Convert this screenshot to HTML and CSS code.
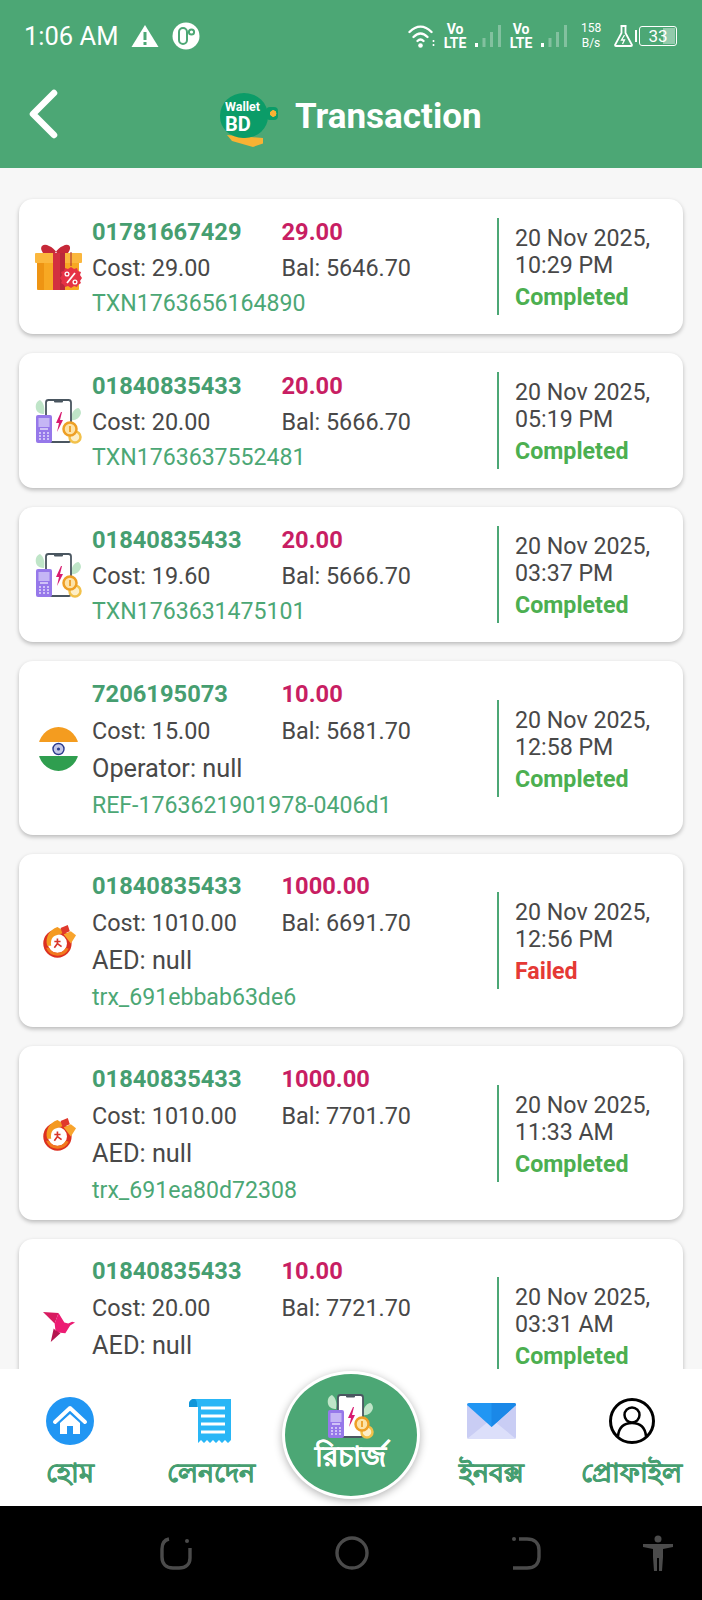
FILE: index.html
```html
<!DOCTYPE html>
<html lang="en" dir="ltr">

<head>
  <meta charset="utf-8">
  <title>Transaction</title>
  <link rel="stylesheet" href="styles.css">
</head>

<body>

  <!-- shared icons -->
  <svg class="defs" width="0" height="0">
    <symbol id="ic-gift" viewBox="0 0 47 47">
      <path d="M8 9C3 2 9-1 14 2c3 1 6 4 8 7zM33 9c5-7 0-10-5-7-3 1-6 4-8 7z" fill="#c62838"/>
      <rect x="2" y="18" width="42" height="28" rx="1" fill="#f7a823"/>
      <path d="M2 18h7v28H4a2 2 0 0 1-2-2z" fill="#ee9413"/>
      <rect x="0" y="9" width="47" height="10" rx="1" fill="#fbb73d"/>
      <rect x="18" y="9" width="12" height="37" fill="#d32f3f"/>
      <rect x="25" y="9" width="5" height="37" fill="#b9283a"/>
      <path d="M36 8v14" stroke="#a82233" stroke-width="1"/>
      <path d="M36 23l3 2 3-1 1 3 3 1-1 3 2 3-2 3 1 2-3 2-1 2-3-1-3 2-3-2-3 1-1-2-3-2 1-2-2-3 2-3-1-3 3-1 1-3 3 1z" fill="#e53245"/>
      <path d="M40 29l-8 10" stroke="#fff" stroke-width="1.8"/>
      <circle cx="32" cy="30" r="1.900" fill="none" stroke="#fff" stroke-width="1.300"/>
      <circle cx="40" cy="38" r="1.900" fill="none" stroke="#fff" stroke-width="1.300"/>
    </symbol>

    <symbol id="ic-recharge" viewBox="0 0 47 47">
      <path d="M1 11C0 6 2 3 5 2c4 3 5 8 4 14-3 0-7-1-8-5z" fill="#bfe5c8"/>
      <path d="M46 15c0-3-2-5-3-5-4 1-7 5-7 12 4 1 9-2 10-7z" fill="#bfe5c8"/>
      <rect x="11" y="2" width="25" height="42" rx="2.500" fill="#fff" stroke="#4a5660" stroke-width="1.800"/>
      <path d="M19 2h9v1.500a1 1 0 0 1-1 1h-7a1 1 0 0 1-1-1z" fill="#4a5660"/>
      <path d="M26 14l-5 11h3l-2 9 6-12h-3l2-8z" fill="#d81b70"/>
      <rect x="1" y="17" width="16" height="28" rx="2" fill="#9678ea"/>
      <rect x="3.500" y="20" width="11" height="9" fill="#c5b6f5"/>
      <path d="M5 31h8M4 35h2M8 35h2M12 35h2M4 38h2M8 38h2M12 38h2M4 41h2M8 41h2M12 41h2" stroke="#e3dbfb" stroke-width="1.500"/>
      <circle cx="40" cy="39" r="5.500" fill="#fdeec6" stroke="#f2c14a" stroke-width="2.500"/>
      <circle cx="35" cy="31" r="6.500" fill="#fde3a8" stroke="#ee9f25" stroke-width="2.500"/>
      <path d="M35 28v6" stroke="#ee9f25" stroke-width="1.800"/>
    </symbol>

    <symbol id="ic-india" viewBox="0 0 41 44">
      <clipPath id="flag-clip"><ellipse cx="20.500" cy="22" rx="20.500" ry="22"/></clipPath>
      <g clip-path="url(#flag-clip)">
        <rect width="41" height="15" fill="#f49c1f"/>
        <rect y="15" width="41" height="14" fill="#fff"/>
        <rect y="29" width="41" height="15" fill="#2f9e4f"/>
      </g>
      <circle cx="20.500" cy="22" r="5.500" fill="#c3c6e6" stroke="#2b3a8c" stroke-width="1.400"/>
      <circle cx="20.500" cy="22" r="1.600" fill="#2b3a8c"/>
    </symbol>

    <symbol id="ic-operator" viewBox="0 0 32 32">
      <circle cx="14" cy="18" r="11.500" fill="#fff" stroke="#dc3021" stroke-width="4.500"/>
      <path d="M3 22a12 12 0 0 0 22 1l-3-1a9 9 0 0 1-16 0z" fill="#f27a1e"/>
      <path d="M4 20C2 12 6 5 14 2l8 5-9 3c-4 1-6 5-5 10z" fill="#f49a21"/>
      <path d="M20 9l7-3 5 4-5 8z" fill="#f8a42d"/>
      <path d="M17 3l7-3 2 6-7 3z" fill="#e0392c"/>
      <path d="M14 13v5l-3 4M14 18l4 3M11 16h6" stroke="#d8352a" stroke-width="1.600" fill="none"/>
    </symbol>

    <symbol id="ic-bird" viewBox="0 0 34 32">
      <path d="M0 1l16 1-4 11z" fill="#d81b60"/>
      <path d="M16 2l6 10 4 1 4-2 3 1-5 3-5 8-10-1-1-9z" fill="#ec1c73"/>
      <path d="M11 18l2 2 5 3-10 9z" fill="#b5164f"/>
    </symbol>
  </svg>

  <div class="app">

    <div class="topbar">
      <div class="status">
        <div class="status-left">
          <span class="time">1:06 AM</span>
          <svg width="28" height="24" viewBox="0 0 28 24"><path d="M14 1l13.500 22H.5z" fill="#fff"/><path d="M12.500 8h3v8h-3zM12.500 18h3v3h-3z" fill="#4ca775"/></svg>
          <svg width="28" height="28" viewBox="0 0 28 28"><circle cx="14" cy="14" r="13.500" fill="#fff"/><rect x="7" y="6" width="8" height="16" rx="4" fill="#fff" stroke="#4ca775" stroke-width="2"/><circle cx="19.500" cy="10" r="2.600" fill="none" stroke="#4ca775" stroke-width="2"/></svg>
        </div>
        <div class="status-right">
          <svg width="27" height="24" viewBox="0 0 27 24"><g fill="none" stroke="#fff" stroke-width="2.400" stroke-linecap="round"><path d="M1.500 8c7-7 15-7 22 0"/><path d="M5.500 13c4.500-4.500 9.500-4.500 14 0"/><path d="M9.500 17c2-2 4-2 6 0"/></g><circle cx="12.500" cy="21.500" r="2.300" fill="#fff"/><path d="M25.500 16v2M25.500 20v2" stroke="#fff" stroke-width="1.600"/></svg>
          <span class="volte"><span>Vo</span><span>LTE</span></span>
          <svg width="26" height="24" viewBox="0 0 26 24"><rect x="0" y="19" width="3" height="4" fill="#fff"/><g fill="#fff" opacity=".3"><rect x="7.500" y="14" width="3" height="9"/><rect x="15" y="8" width="3" height="15"/><rect x="23" y="1" width="3" height="22"/></g></svg>
          <span class="volte"><span>Vo</span><span>LTE</span></span>
          <svg width="26" height="24" viewBox="0 0 26 24"><rect x="0" y="19" width="3" height="4" fill="#fff"/><g fill="#fff" opacity=".3"><rect x="7.500" y="14" width="3" height="9"/><rect x="15" y="8" width="3" height="15"/><rect x="23" y="1" width="3" height="22"/></g></svg>
          <span class="speed"><span>158</span><span>B/s</span></span>
          <svg class="flask" width="21" height="22" viewBox="0 0 20 22"><path d="M7 1h6M8 1v7L1.500 20a1 1 0 0 0 1 1h15a1 1 0 0 0 1-1L12 8V1" fill="none" stroke="#fff" stroke-width="1.800"/><path d="M11 10l-3 5h3l-2 4" fill="none" stroke="#fff" stroke-width="1.300"/></svg>
          <div class="battery"><i class="battery-cap"></i><div class="battery-body"><span class="battery-fill"></span><span class="battery-num">33</span></div></div>
        </div>
      </div>

      <div class="titlebar">
        <svg class="back" width="32" height="50" viewBox="0 0 32 50"><path d="M27 4L6 25l21 21" fill="none" stroke="#fff" stroke-width="6.500" stroke-linecap="round" stroke-linejoin="round"/></svg>
        <div class="logo">
          <span class="logo-tail"></span>
          <span class="logo-body">
            <span class="logo-small">Wallet</span>
            <span class="logo-big">BD</span>
          </span>
          <span class="logo-clasp"></span>
        </div>
        <h1>Transaction</h1>
      </div>
    </div>

    <div class="list">

      <div class="card">
        <svg class="op-icon"><use href="#ic-gift"/></svg>
        <div class="info">
          <div class="line"><span class="num">01781667429</span><span class="amt">29.00</span></div>
          <div class="line"><span class="col">Cost: 29.00</span><span>Bal: 5646.70</span></div>
          <div class="line ref">TXN1763656164890</div>
        </div>
        <div class="side">
          <div class="date">20 Nov 2025,<br>10:29 PM</div>
          <div class="state ok">Completed</div>
        </div>
      </div>

      <div class="card">
        <svg class="op-icon"><use href="#ic-recharge"/></svg>
        <div class="info">
          <div class="line"><span class="num">01840835433</span><span class="amt">20.00</span></div>
          <div class="line"><span class="col">Cost: 20.00</span><span>Bal: 5666.70</span></div>
          <div class="line ref">TXN1763637552481</div>
        </div>
        <div class="side">
          <div class="date">20 Nov 2025,<br>05:19 PM</div>
          <div class="state ok">Completed</div>
        </div>
      </div>

      <div class="card">
        <svg class="op-icon"><use href="#ic-recharge"/></svg>
        <div class="info">
          <div class="line"><span class="num">01840835433</span><span class="amt">20.00</span></div>
          <div class="line"><span class="col">Cost: 19.60</span><span>Bal: 5666.70</span></div>
          <div class="line ref">TXN1763631475101</div>
        </div>
        <div class="side">
          <div class="date">20 Nov 2025,<br>03:37 PM</div>
          <div class="state ok">Completed</div>
        </div>
      </div>

      <div class="card tall">
        <svg class="op-icon flag"><use href="#ic-india"/></svg>
        <div class="info">
          <div class="line"><span class="num">7206195073</span><span class="amt">10.00</span></div>
          <div class="line"><span class="col">Cost: 15.00</span><span>Bal: 5681.70</span></div>
          <div class="line extra">Operator: null</div>
          <div class="line ref">REF-1763621901978-0406d1</div>
        </div>
        <div class="side">
          <div class="date">20 Nov 2025,<br>12:58 PM</div>
          <div class="state ok">Completed</div>
        </div>
      </div>

      <div class="card tall">
        <svg class="op-icon small"><use href="#ic-operator"/></svg>
        <div class="info">
          <div class="line"><span class="num">01840835433</span><span class="amt">1000.00</span></div>
          <div class="line"><span class="col">Cost: 1010.00</span><span>Bal: 6691.70</span></div>
          <div class="line extra">AED: null</div>
          <div class="line ref">trx_691ebbab63de6</div>
        </div>
        <div class="side">
          <div class="date">20 Nov 2025,<br>12:56 PM</div>
          <div class="state fail">Failed</div>
        </div>
      </div>

      <div class="card tall">
        <svg class="op-icon small"><use href="#ic-operator"/></svg>
        <div class="info">
          <div class="line"><span class="num">01840835433</span><span class="amt">1000.00</span></div>
          <div class="line"><span class="col">Cost: 1010.00</span><span>Bal: 7701.70</span></div>
          <div class="line extra">AED: null</div>
          <div class="line ref">trx_691ea80d72308</div>
        </div>
        <div class="side">
          <div class="date">20 Nov 2025,<br>11:33 AM</div>
          <div class="state ok">Completed</div>
        </div>
      </div>

      <div class="card tall">
        <svg class="op-icon small"><use href="#ic-bird"/></svg>
        <div class="info">
          <div class="line"><span class="num">01840835433</span><span class="amt">10.00</span></div>
          <div class="line"><span class="col">Cost: 20.00</span><span>Bal: 7721.70</span></div>
          <div class="line extra">AED: null</div>
        </div>
        <div class="side">
          <div class="date">20 Nov 2025,<br>03:31 AM</div>
          <div class="state ok">Completed</div>
        </div>
      </div>

    </div>

    <nav class="bottom-nav">
      <div class="nav-item">
        <div class="nav-icon"><svg width="48" height="48" viewBox="0 0 48 48"><circle cx="24" cy="24" r="24" fill="#2196f3"/><path d="M9 25L24 11l15 14" fill="none" stroke="#fff" stroke-width="4" stroke-linecap="round" stroke-linejoin="round"/><path d="M14 26l10-9 10 9v11H27v-8h-6v8h-7z" fill="#fff"/></svg></div>
        <span>হোম</span>
      </div>
      <div class="nav-item">
        <div class="nav-icon"><svg width="44" height="44" viewBox="0 0 44 44"><path d="M6 0h36v41l-3 3-3-3-3 3-3-3-3 3-3-3-3 3-3-3-3 3-3-3-3 3V8H0V5c0-3 3-5 6-5z" fill="#29b6f6"/><path d="M0 8V5c0-3 2-5 5-5 2 0 3 2 3 5v3z" fill="#0f95d8"/><path d="M12 9h24M12 17h24M12 25h24M12 33h24" stroke="#fff" stroke-width="3"/></svg></div>
        <span>লেনদেন</span>
      </div>
      <div class="nav-item nav-main">
        <svg width="49" height="47"><use href="#ic-recharge"/></svg>
        <span>রিচার্জ</span>
      </div>
      <div class="nav-item">
        <div class="nav-icon"><svg width="49" height="36" viewBox="0 0 49 36"><rect width="49" height="36" rx="2" fill="#c9cdf4"/><path d="M0 36l24.500-20L49 36z" fill="#dcdffa"/><path d="M0 2a2 2 0 0 1 2-2h45a2 2 0 0 1 2 2L24.500 24z" fill="#2196f3"/><path d="M24.500 0H47a2 2 0 0 1 2 2L24.500 24z" fill="#1a88e8"/></svg></div>
        <span>ইনবক্স</span>
      </div>
      <div class="nav-item">
        <div class="nav-icon"><svg width="46" height="46" viewBox="0 0 46 46"><circle cx="23" cy="23" r="21.500" fill="#fff" stroke="#000" stroke-width="3"/><circle cx="23" cy="17" r="7.500" fill="none" stroke="#000" stroke-width="2.500"/><path d="M9 38c1-9 6-13 14-13s13 4 14 13" fill="none" stroke="#000" stroke-width="2.500"/></svg></div>
        <span>প্রোফাইল</span>
      </div>
    </nav>

    <div class="sys-nav">
      <svg class="sys-a" width="32" height="34" viewBox="0 0 32 34"><path d="M9 3C4 4 2 8 2 13v8c0 7 4 11 11 11h6c7 0 11-4 11-10V12" fill="none" stroke="#4b4b4b" stroke-width="3.400"/><circle cx="27" cy="5" r="2" fill="#4b4b4b"/></svg>
      <svg class="sys-b" width="34" height="34" viewBox="0 0 34 34"><ellipse cx="17" cy="17" rx="15" ry="15" fill="none" stroke="#4b4b4b" stroke-width="3.400"/></svg>
      <svg class="sys-c" width="30" height="34" viewBox="0 0 30 34"><path d="M8 3h8c7 0 12 4 12 11v7c0 7-5 11-12 11H2" fill="none" stroke="#4b4b4b" stroke-width="3.400"/><circle cx="3" cy="3" r="2" fill="#4b4b4b"/></svg>
      <svg class="sys-d" width="32" height="36" viewBox="0 0 32 36"><circle cx="16" cy="4" r="3.500" fill="#4b4b4b"/><path d="M1 9h30v3l-10 2v8l-1 14h-3V23h-2v13h-3l-1-14v-8L1 12z" fill="#4b4b4b"/></svg>
    </div>

  </div>

</body>

</html>
```

FILE: styles.css
```css
/* General reset and layout */
* {
  margin: 0;
  padding: 0;
  box-sizing: border-box;
}

body {
  font-family: "Roboto", "Noto Sans", sans-serif;
  color: #484848;
  background: #000;
}

.defs {
  display: block;
  height: 0;
}

.app {
  display: flex;
  flex-direction: column;
  width: 702px;
  height: 1600px;
  overflow: hidden;
}

/* Green top area */
.topbar {
  flex: none;
  height: 168px;
  background: #4ca775;
  color: #fff;
}

.status {
  display: flex;
  justify-content: space-between;
  align-items: center;
  height: 72px;
  padding: 0 25px 0 24px;
}

.status-left {
  display: flex;
  align-items: center;
  gap: 13px;
}

.status-right {
  display: flex;
  align-items: center;
  gap: 8px;
}

.time {
  font-size: 25.500px;
}

.volte {
  display: flex;
  flex-direction: column;
  align-items: center;
  width: 24px;
  font-size: 14px;
  font-weight: 700;
  line-height: 14px;
}

.speed {
  display: flex;
  flex-direction: column;
  align-items: center;
  width: 20px;
  margin: 0 4px 0 6px;
  font-size: 12px;
  line-height: 15px;
}

.flask {
  margin-right: -7px;
}

.battery {
  display: flex;
  align-items: center;
  gap: 2px;
}

.battery-cap {
  width: 2px;
  height: 12px;
  background: #fff;
}

.battery-body {
  display: flex;
  justify-content: center;
  align-items: center;
  position: relative;
  width: 38px;
  height: 20px;
  border: 1.500px solid #fff;
  border-radius: 3px;
  font-size: 17px;
}

.battery-fill {
  position: absolute;
  top: 1px;
  right: 1px;
  bottom: 1px;
  width: 12px;
  background: rgba(255, 255, 255, 0.4);
}

.battery-num {
  position: relative;
}

.titlebar {
  display: flex;
  align-items: center;
  height: 96px;
  padding: 0 0 10px 27px;
}

.back {
  flex: none;
  margin-bottom: 3px;
}

.logo {
  position: relative;
  flex: none;
  width: 58px;
  height: 54px;
  margin: 10px 17px 0 161px;
}

.logo-tail {
  position: absolute;
  left: 7px;
  bottom: 0;
  width: 36px;
  height: 12px;
  background: #f9b233;
  clip-path: polygon(0 0, 100% 25%, 100% 70%, 72% 100%, 14% 50%);
}

.logo-body {
  display: flex;
  flex-direction: column;
  justify-content: center;
  position: relative;
  width: 48px;
  height: 45px;
  padding: 2px 0 0 5px;
  background: #0b9c68;
  border-radius: 50% 50% 48% 48%;
  color: #fff;
}

.logo-small {
  font-size: 12.500px;
  font-weight: 700;
  line-height: 14px;
}

.logo-big {
  font-size: 20px;
  font-weight: 700;
  line-height: 20px;
}

.logo-clasp {
  position: absolute;
  left: 46px;
  top: 14px;
  width: 12px;
  height: 13px;
  background: radial-gradient(circle at 60% 50%, #f9b233 0 3px, #0b9c68 3.500px);
  border-radius: 4px;
}

h1 {
  margin-top: 4px;
  font-size: 35px;
  font-weight: 700;
  line-height: 40px;
}

/* Transaction cards */
.list {
  flex: 1;
  min-height: 0;
  overflow: hidden;
  display: flex;
  flex-direction: column;
  gap: 19px;
  padding: 31px 19px 0;
  background: #f7f7f7;
}

.card {
  flex: none;
  display: flex;
  align-items: center;
  padding: 15px 0 13px 16px;
  background: #fff;
  border-radius: 14px;
  box-shadow: 0 2px 4px rgba(0, 0, 0, 0.25);
}

.card.tall {
  height: 173.500px;
  padding: 14px 0 11px 16px;
}

.op-icon {
  flex: none;
  width: 47px;
  height: 47px;
  margin-right: 10px;
}

.op-icon.flag {
  width: 41px;
  height: 44px;
  margin: 0 13px 0 3px;
}

.op-icon.small {
  width: 33px;
  height: 33px;
  margin: 0 16px 0 8px;
}

.info {
  flex: 1;
  align-self: flex-start;
  min-width: 0;
}

.line {
  display: flex;
  align-items: center;
  height: 35.700px;
  font-size: 23.400px;
}

.tall .line {
  height: 37.200px;
}

.num {
  width: 189.500px;
  font-size: 23.700px;
  font-weight: 700;
  color: #469e70;
}

.amt {
  font-size: 23.700px;
  font-weight: 700;
  color: #c81e63;
}

.col {
  width: 189.500px;
}

.line.extra {
  font-size: 25.300px;
}

.line.ref {
  font-size: 23.100px;
  color: #4ca775;
}

.side {
  flex: none;
  width: 186px;
  height: 97px;
  margin-top: -2px;
  padding: 7px 0 0 16px;
  border-left: 2px solid #4ca775;
  font-size: 23.200px;
}

.date {
  line-height: 27px;
}

.state {
  margin-top: 5px;
  font-weight: 700;
  line-height: 27px;
}

.ok {
  color: #4caf50;
}

.fail {
  color: #e53935;
}

/* Bottom navigation */
.bottom-nav {
  flex: none;
  display: grid;
  grid-template-columns: repeat(5, 1fr);
  height: 137px;
  background: #fff;
}

.nav-item {
  display: flex;
  flex-direction: column;
  align-items: center;
  padding-top: 27px;
  font-size: 26.800px;
  font-weight: 700;
  line-height: 34px;
  color: #469e70;
  white-space: nowrap;
  -webkit-text-stroke: 0.3px #469e70;
}

.nav-icon {
  display: flex;
  align-items: center;
  height: 50px;
  margin-bottom: 10px;
}

.nav-main {
  justify-self: center;
  width: 138px;
  height: 128px;
  margin-top: 2px;
  padding-top: 19px;
  background: #4ca775;
  border: 3px solid #fff;
  border-radius: 50%;
  box-shadow: 0 2px 8px rgba(0, 0, 0, 0.3);
  color: #fff;
  font-size: 27.500px;
  -webkit-text-stroke: 0.3px #fff;
}

/* Android buttons */
.sys-nav {
  flex: none;
  display: flex;
  align-items: center;
  height: 94px;
  background: #000;
}

.sys-a {
  margin-left: 160px;
}

.sys-b {
  margin-left: 143px;
}

.sys-c {
  margin-left: 142px;
}

.sys-d {
  margin-left: 101px;
}
```
